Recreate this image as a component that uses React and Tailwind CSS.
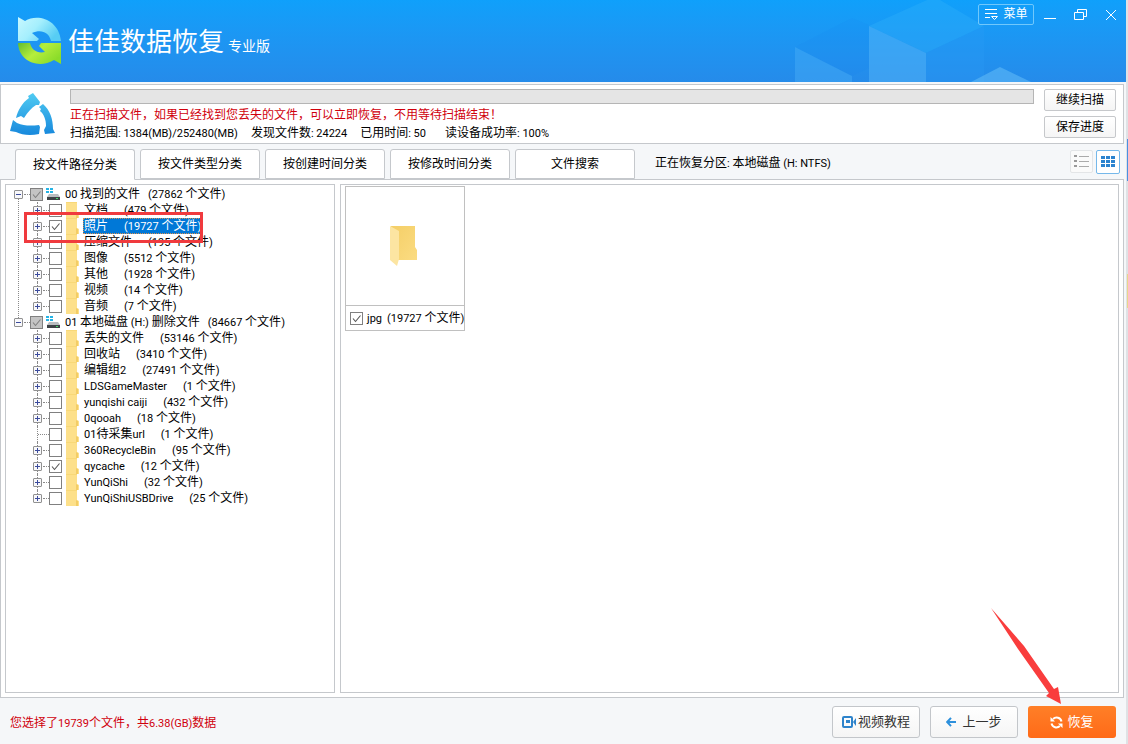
import React from "react";

const CJK = /([\u3000-\u9fff\uff00-\uffef]+)/;

// Latin runs are set one pixel smaller than the Chinese text beside them.
function Mixed({ children }) {
  return children.split(CJK).map((part, i) =>
    part === "" ? null : CJK.test(part) ? (
      part
    ) : (
      <span key={i} className="text-[11px]">
        {part}
      </span>
    )
  );
}

const tree = [
  {
    name: "00 找到的文件",
    count: "(27862 个文件)",
    items: [
      ["文档", "(479 个文件)"],
      ["照片", "(19727 个文件)", { checked: true, selected: true }],
      ["压缩文件", "(195 个文件)"],
      ["图像", "(5512 个文件)"],
      ["其他", "(1928 个文件)"],
      ["视频", "(14 个文件)"],
      ["音频", "(7 个文件)"],
    ],
  },
  {
    name: "01 本地磁盘 (H:) 删除文件",
    count: "(84667 个文件)",
    items: [
      ["丢失的文件", "(53146 个文件)"],
      ["回收站", "(3410 个文件)"],
      ["编辑组2", "(27491 个文件)"],
      ["LDSGameMaster", "(1 个文件)"],
      ["yunqishi caiji", "(432 个文件)"],
      ["0qooah", "(18 个文件)"],
      ["01待采集url", "(1 个文件)", { leaf: true }],
      ["360RecycleBin", "(95 个文件)"],
      ["qycache", "(12 个文件)", { checked: true }],
      ["YunQiShi", "(32 个文件)"],
      ["YunQiShiUSBDrive", "(25 个文件)"],
    ],
  },
];

function Logo() {
  return (
    <svg viewBox="0 0 46 50" className="h-[50px] w-[46px]" aria-hidden="true">
      <defs>
        <linearGradient id="lg-blue" x1="0" y1="0" x2="1" y2="0.5">
          <stop offset="0" stopColor="#c8f8ff" />
          <stop offset="0.5" stopColor="#a5effd" />
          <stop offset="1" stopColor="#57cdf4" />
        </linearGradient>
        <linearGradient id="lg-green" x1="0" y1="0" x2="1" y2="0.6">
          <stop offset="0" stopColor="#62bd2e" />
          <stop offset="0.5" stopColor="#b6ee3c" />
          <stop offset="1" stopColor="#8bdc2a" />
        </linearGradient>
      </defs>
      <path d="M1 1 L8 5 C21 -3 42 4 44 25 L34 25 C32 16 24 13 15 17 L22 23 L20 25 L1 25 Z" fill="url(#lg-blue)" />
      <path d="M1 27 L13 27 C14 33 20 38 28 36 L22 30 L24 27 L44 27 L44 48 L37 44 C22 53 2 46 1 27 Z" fill="url(#lg-green)" />
    </svg>
  );
}

function ScanMark() {
  return (
    <svg viewBox="0 0 46 44" className="h-[44px] w-[46px]" aria-hidden="true">
      <defs>
        <linearGradient id="scan" x1="0" y1="0" x2="0" y2="44" gradientUnits="userSpaceOnUse">
          <stop offset="0" stopColor="#52cdf3" />
          <stop offset="1" stopColor="#1687dc" />
        </linearGradient>
      </defs>
      <g fill="url(#scan)">
        <path d="M23 1 L30 10 L29 13 L26 13 C21 16 18 20 14 26 L11 24 L6 26 C8 18 12 11 19 6 L18 4 Z" />
        <path d="M33 12 C40 18 43 27 43 37 L45 41 L35 42 L34 38 L36 34 C36 28 34 22 30 19 L31 17 L29 15 Z" />
        <path d="M3 28 L7 31 C14 34 21 34 29 33 L30 35 L29 42 C20 44 12 43 6 40 L0 39 Z" />
      </g>
    </svg>
  );
}

function HeaderCubes() {
  return (
    <svg viewBox="0 0 240 82" className="absolute bottom-0 right-[91px] h-[82px] w-[240px]" aria-hidden="true">
      <path d="M0 47 L57 76 L57 82 L0 82 Z" fill="#4db2f8" opacity="0.4" />
      <path d="M0 47 L57 18 L74 25 L74 68 L57 76 Z" fill="#1684f0" opacity="0.12" />
      <path d="M74 26 L132 0 L145 0 L189 26 L131 53 Z" fill="#2eb0fa" opacity="0.4" />
      <path d="M74 26 L131 53 L131 82 L74 82 Z" fill="#55b6f7" opacity="0.5" />
      <path d="M131 53 L189 26 L189 82 L131 82 Z" fill="#2b9bf5" opacity="0.3" />
      <path d="M176 82 L205 67 L236 82 Z" fill="#64bdf8" opacity="0.55" />
    </svg>
  );
}

function Check({ checked, gray, label }) {
  return (
    <span className="relative z-10 flex size-[13px] shrink-0">
      <input
        type="checkbox"
        defaultChecked={checked}
        aria-label={label}
        className={`peer size-[13px] appearance-none border border-[#808080] ${gray ? "bg-[#c4c4c4]" : "bg-white"}`}
      />
      <svg viewBox="0 0 13 13" className="pointer-events-none absolute inset-0 hidden size-[13px] peer-checked:block" aria-hidden="true">
        <path d="M3 6.5 L5.5 9.5 L10.5 3.5" fill="none" stroke={gray ? "#808080" : "#555"} strokeWidth="1.1" />
      </svg>
    </span>
  );
}

function Expander({ open, label }) {
  return (
    <button type="button" aria-label={label} className="relative z-10 flex size-[9px] shrink-0 items-center justify-center rounded-[1px] border border-[#919191] bg-[#f8f8fa]">
      <svg viewBox="0 0 7 7" className="size-[7px] shrink-0" aria-hidden="true">
        <path d={open ? "M1 3.5H6" : "M1 3.5H6M3.5 1V6"} stroke="#3b4b9c" strokeWidth="1" />
      </svg>
    </button>
  );
}

function DriveIcon() {
  return (
    <svg viewBox="0 0 16 14" className="h-[14px] w-4 shrink-0" aria-hidden="true">
      <path d="M1 1h3v2H1zM5 1h3v2H5zM1 4h3v2H1zM5 4h3v2H5z" fill="#25b3e5" />
      <path d="M4 7h9l2 3H2z" fill="#b9bdc0" />
      <path d="M2 10h13v3H2z" fill="#3d4246" />
      <path d="M11 11h2v1h-2z" fill="#42dc68" />
    </svg>
  );
}

function FolderStrip() {
  return (
    <svg viewBox="0 0 13 16" className="h-4 w-[13px] shrink-0" aria-hidden="true">
      <path d="M0 0h11v10l2 1v5H0z" fill="#fde08a" />
      <path d="M0 0h11v1H0z" fill="#f8d878" />
      <path d="M10 10l2 1v5h-2z" fill="#f3cd66" />
    </svg>
  );
}

function TreeItem({ item, last }) {
  const [name, count, opts = {}] = item;
  return (
    <li className="relative flex h-4 items-center pl-[27px]">
      <span className={`absolute left-[31px] top-0 border-l border-dotted border-[#8a8a8a] ${last ? "h-2" : "h-4"}`} />
      {opts.leaf ? (
        <span className="w-[9px] shrink-0" />
      ) : (
        <Expander label={`展开 ${name}`} />
      )}
      <span className={`h-px shrink-0 border-t border-dotted border-[#8a8a8a] ${opts.leaf ? "-ml-1 w-[11px]" : "ml-px w-[6px]"}`} />
      <Check checked={opts.checked} label={name} />
      <span className="ml-1 flex">
        <FolderStrip />
      </span>
      <span
        className={`ml-1 flex h-4 items-center gap-4 whitespace-nowrap pl-px ${
          opts.selected ? "bg-[#0078d7] text-white outline-1 -outline-offset-1 outline-dotted outline-[#d89050]" : ""
        }`}
      >
        <span><Mixed>{name}</Mixed></span>
        <span><Mixed>{count}</Mixed></span>
      </span>
      {opts.selected && (
        <span className="pointer-events-none absolute left-[18px] -top-1.5 z-20 h-[31px] w-[179px] border-[3px] border-[#f03a3e]" />
      )}
    </li>
  );
}

function Tree() {
  return (
    <ul className="pl-2 pt-px text-xs leading-4">
      {tree.map((g, gi) => (
        <li key={g.name} className="relative">
          {gi < tree.length - 1 && (
            <span className="absolute bottom-[-8px] left-1 top-2 border-l border-dotted border-[#8a8a8a]" />
          )}
          <div className="flex h-4 items-center whitespace-nowrap">
            <Expander open label={`收起 ${g.name}`} />
            <span className="ml-px h-px w-[6px] border-t border-dotted border-[#8a8a8a]" />
            <Check checked gray label={g.name} />
            <span className="ml-[2px] flex"><DriveIcon /></span>
            <span className="ml-1 flex gap-2">
              <span><Mixed>{g.name}</Mixed></span>
              <span><Mixed>{g.count}</Mixed></span>
            </span>
          </div>
          <ul className="-ml-2">
            {g.items.map((it, i) => (
              <TreeItem key={it[0]} item={it} last={i === g.items.length - 1} />
            ))}
          </ul>
        </li>
      ))}
    </ul>
  );
}

const tabs = ["按文件路径分类", "按文件类型分类", "按创建时间分类", "按修改时间分类", "文件搜索"];

export default function App() {
  return (
    <div className="relative flex min-h-screen flex-col border-r-2 border-[#dfe2e5] bg-[#f5f7f9] font-[Roboto,'Noto_Sans_CJK_SC',sans-serif] text-xs text-black">
      <span className="absolute -right-[2px] top-[139px] h-[42px] w-px bg-[#4a90e2]" />
      <span className="absolute -right-[2px] top-[274px] h-[34px] w-px bg-[#e8d58c]" />
      <header className="relative flex h-[82px] shrink-0 justify-between overflow-hidden bg-linear-to-b from-[#0fa0fb] to-[#258bea]">
        <HeaderCubes />
        <div className="relative flex items-center pl-[17px]">
          <Logo />
          <h1 className="ml-[5px] flex items-baseline gap-1 pt-0.5 text-white">
            <span className="text-[26px] font-normal">佳佳数据恢复</span>
            <span className="text-sm">专业版</span>
          </h1>
        </div>
        <div className="relative flex h-7 items-center pr-[9px] text-white">
          <button type="button" className="flex h-[21px] w-14 items-center justify-center gap-1 rounded-[2px] border border-[#70c8fc]">
            <svg viewBox="0 0 15 13" className="h-[13px] w-[15px]" fill="none" stroke="white" aria-hidden="true">
              <path d="M1 1.5h12M1 5.5h12M1 9.5h5M7.500 8.500h6L10.500 11.500z" />
            </svg>
            <span>菜单</span>
          </button>
          <button type="button" aria-label="最小化" className="ml-2.5 h-2.5 w-3 border-b border-white" />
          <button type="button" aria-label="还原" className="ml-[18px] mt-0.5">
            <svg viewBox="0 0 13 12" className="h-3 w-[13px]" fill="none" stroke="white" aria-hidden="true">
              <path d="M.5 3.500h9v7h-9zM3.500 3.500v-3h9v7h-3" />
            </svg>
          </button>
          <button type="button" aria-label="关闭" className="ml-[18px] mt-0.5">
            <svg viewBox="0 0 12 12" className="size-3" fill="none" stroke="white" aria-hidden="true">
              <path d="M1 1l10 10M11 1L1 11" />
            </svg>
          </button>
        </div>
      </header>

      <section className="mr-[2px] mt-[2px] flex h-[60px] shrink-0 border border-[#c5c8cc] bg-white pl-[9px] pr-[7px]">
        <div className="flex w-[60px] shrink-0 items-center">
          <ScanMark />
        </div>
        <div className="min-w-0 flex-1 pt-1">
          <div role="progressbar" aria-label="扫描进度" className="h-[15px] border border-[#b5b5b5] bg-[#e5e5e5]" />
          <p className="mt-0.5 leading-[18px] text-[#d0000c]">正在扫描文件，如果已经找到您丢失的文件，可以立即恢复，不用等待扫描结束！</p>
          <p className="flex gap-[13px] leading-[18px]">
            <span><Mixed>扫描范围: 1384(MB)/252480(MB)</Mixed></span>
            <span><Mixed>发现文件数: 24224</Mixed></span>
            <span><Mixed>已用时间: 50</Mixed></span>
            <span className="pl-1.5"><Mixed>读设备成功率: 100%</Mixed></span>
          </p>
        </div>
        <div className="ml-2.5 flex w-[72px] shrink-0 flex-col gap-[5px] pt-1">
          {["继续扫描", "保存进度"].map((t) => (
            <button key={t} type="button" className="h-[22px] rounded-[2px] border border-[#c6c8cb] bg-linear-to-b from-white to-[#f5f5f5]">{t}</button>
          ))}
        </div>
      </section>

      <nav className="mr-[2px] flex h-[35px] shrink-0 items-end pl-[15px] pr-1">
        <div className="flex gap-[5px]" role="tablist">
          {tabs.map((t, i) => (
            <button
              key={t}
              type="button"
              role="tab"
              aria-selected={i === 0}
              className={`w-[120px] rounded-t-[3px] border border-[#c5c8cc] bg-white ${i === 0 ? "relative z-10 -mb-px h-[31px] border-b-white" : "h-[30px]"}`}
            >
              {t}
            </button>
          ))}
        </div>
        <p className="ml-5 flex-1 self-center pt-1"><Mixed>正在恢复分区: 本地磁盘 (H: NTFS)</Mixed></p>
        <div className="flex gap-[3px] self-center">
          <button type="button" aria-label="列表" className="flex size-[23px] items-center justify-center rounded-[2px] border border-[#e3e5e7] bg-[#fafafa]">
            <svg viewBox="0 0 15 12" className="h-3 w-[15px]" aria-hidden="true">
              <path d="M0 0h3v2H0zM0 5h3v2H0zM0 10h3v2H0z" fill="#999" />
              <path d="M5 1h10v1H5zM5 6h10v1H5zM5 11h10v1H5z" fill="#aaa" />
            </svg>
          </button>
          <button type="button" aria-label="缩略图" className="flex size-[24px] items-center justify-center rounded-[2px] border border-[#75b8ea] bg-white">
            <svg viewBox="0 0 14 11" className="h-[11px] w-[14px]" fill="#2b83cf" aria-hidden="true">
              <path d="M0 0h4v3H0zM5 0h4v3H5zM10 0h4v3h-4zM0 4h4v3H0zM5 4h4v3H5zM10 4h4v3h-4zM0 8h4v3H0zM5 8h4v3H5zM10 8h4v3h-4z" />
            </svg>
          </button>
        </div>
      </nav>

      <main className="mr-[2px] flex flex-1 gap-[5px] border border-[#c5c8cc] bg-white p-1">
        <section aria-label="文件夹" className="w-[330px] shrink-0 border border-[#c5c8cc]">
          <Tree />
        </section>
        <section aria-label="文件" className="flex-1 border border-[#c5c8cc] p-1 pt-px">
          <div className="w-[120px] border border-[#c0c0c0]">
            <div className="flex h-[118px] items-center justify-center">
              <svg viewBox="0 0 30 42" className="h-[42px] w-[30px]" aria-hidden="true">
                <defs>
                  <linearGradient id="fold" x1="0" y1="0" x2="1" y2="1">
                    <stop offset="0" stopColor="#f4ce66" />
                    <stop offset="1" stopColor="#fbdc82" />
                  </linearGradient>
                </defs>
                <path d="M1 1h24v21l2 3v10H5z" fill="url(#fold)" />
                <path d="M0 1l9 5v28l-2 7-7-6z" fill="#fce5a2" />
              </svg>
            </div>
            <label className="flex h-[25px] items-center gap-1 whitespace-nowrap border-t border-[#c0c0c0] pl-1">
              <Check checked label="jpg" />
              <span className="flex gap-[5px]"><span><Mixed>jpg</Mixed></span><span><Mixed>(19727 个文件)</Mixed></span></span>
            </label>
          </div>
        </section>
      </main>

      <footer className="relative flex h-[46px] shrink-0 items-center gap-2.5 pl-[10px] pr-[10px] pt-0.5">
        <p className="flex-1 pt-0.5 text-[#d0000c]"><Mixed>您选择了19739个文件，共6.38(GB)数据</Mixed></p>
        <button type="button" className="flex h-8 w-[88px] items-center justify-center gap-0.5 rounded-[3px] border border-[#c3c6ca] bg-linear-to-b from-white to-[#f5f5f5] text-[13px] text-[#333]">
          <svg viewBox="0 0 14 12" className="h-3 w-[14px]" aria-hidden="true">
            <rect x="1" y="1" width="9" height="10" rx="1" fill="none" stroke="#2d83cb" strokeWidth="2" />
            <path d="M4 4h4v3H4z" fill="#2d83cb" />
            <path d="M11 6l3-4v8z" fill="#2d83cb" />
          </svg>
          视频教程
        </button>
        <button type="button" className="flex h-8 w-[88px] items-center justify-center gap-1.5 rounded-[3px] border border-[#c3c6ca] bg-linear-to-b from-white to-[#f5f5f5] text-[13px] text-[#333]">
          <svg viewBox="0 0 10 10" className="size-2.5" fill="none" stroke="#2d90dc" strokeWidth="2" aria-hidden="true">
            <path d="M5 .8L1.200 5 5 9.200M1.500 5H10" />
          </svg>
          上一步
        </button>
        <button type="button" className="flex h-8 w-[88px] items-center justify-center gap-1 rounded-[3px] bg-linear-to-b from-[#ff7f27] to-[#ff6a17] text-[13px] text-white">
          <svg viewBox="0 0 13 13" className="size-[13px]" fill="none" stroke="white" strokeWidth="2" aria-hidden="true">
            <path d="M3 3C6 .5 10.500 1.500 11.500 5.500M10 10C7 12.500 2.500 11.500 1.500 7.500" />
            <path d="M.5 1v4.500h4.500zM12.500 12V7.500h-4.500z" fill="white" stroke="none" />
          </svg>
          恢复
        </button>
        <svg viewBox="0 0 72 98" className="pointer-events-none absolute bottom-[39px] right-[64px] z-20 h-[98px] w-[72px]" aria-hidden="true">
          <path d="M1 1L34 39L64 82L68 80L71 97L56 89L59 86L28 42Z" fill="#f93d3d" />
        </svg>
      </footer>
    </div>
  );
}
